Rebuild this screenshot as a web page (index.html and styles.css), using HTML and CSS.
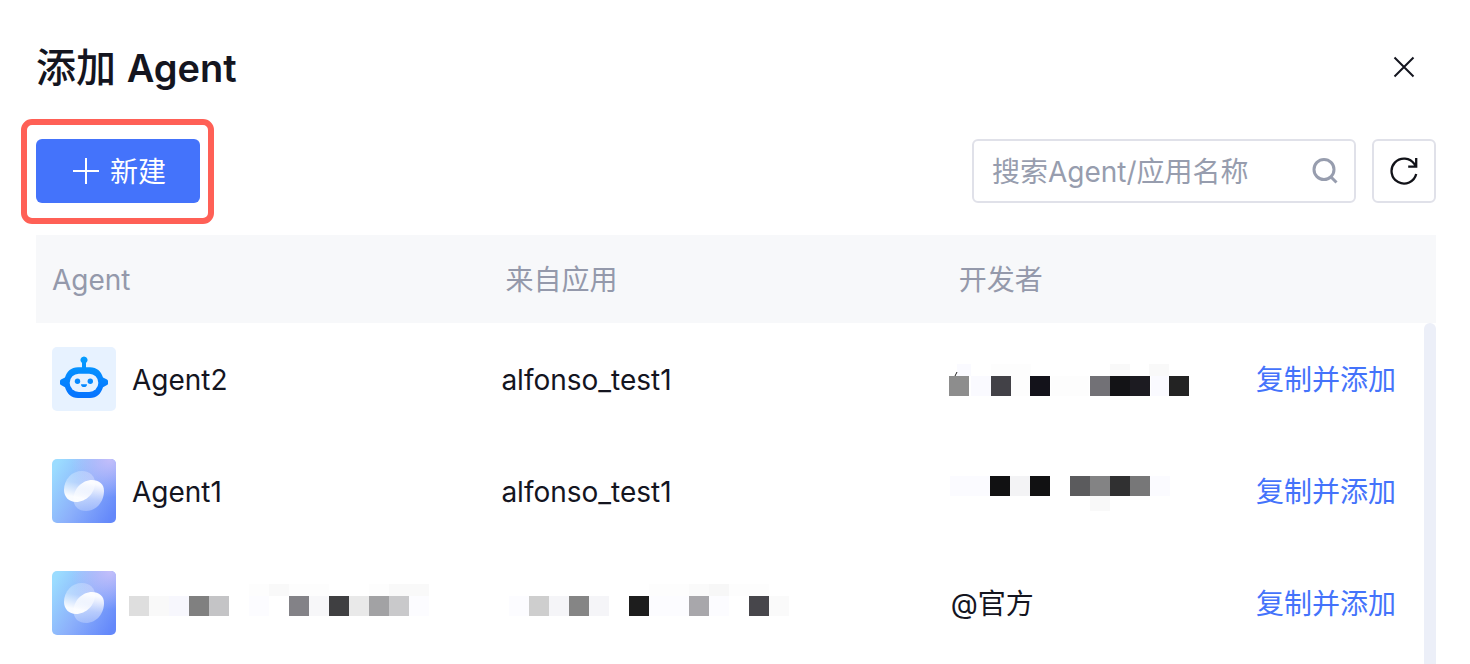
FILE: index.html
```html
<!DOCTYPE html>
<html lang="zh-CN">
<head>
<meta charset="utf-8">
<meta name="viewport" content="width=device-width, initial-scale=1">
<title>添加 Agent</title>
<link rel="stylesheet" href="styles.css">
</head>
<body>
<svg class="defs" aria-hidden="true">
  <defs>
    <linearGradient id="robot-fill" x1="0" y1="0" x2="0" y2="1">
      <stop offset="0" stop-color="#049dff"/><stop offset="1" stop-color="#0672ff"/>
    </linearGradient>
    <linearGradient id="orb-bg" x1="0" y1="0.2" x2="1" y2="0.8">
      <stop offset="0" stop-color="#9bdcff"/><stop offset="0.5" stop-color="#8cb0fb"/><stop offset="1" stop-color="#6488fa"/>
    </linearGradient>
    <radialGradient id="orb-corner" cx="0.9" cy="0" r="0.6">
      <stop offset="0" stop-color="#c3befa"/><stop offset="1" stop-color="#c3befa" stop-opacity="0"/>
    </radialGradient>
    <linearGradient id="orb-back" x1="0.6" y1="0" x2="0.4" y2="1">
      <stop offset="0" stop-color="#fff" stop-opacity="0.25"/><stop offset="0.4" stop-color="#fff" stop-opacity="0.35"/><stop offset="0.85" stop-color="#fff" stop-opacity="0.95"/>
    </linearGradient>
    <linearGradient id="orb-front" x1="0.6" y1="0" x2="0.4" y2="1">
      <stop offset="0.1" stop-color="#fff" stop-opacity="0.95"/><stop offset="0.6" stop-color="#fff" stop-opacity="0.45"/><stop offset="1" stop-color="#fff" stop-opacity="0.25"/>
    </linearGradient>
    <symbol id="orb" viewBox="0 0 64 64">
      <rect width="64" height="64" rx="5" fill="url(#orb-bg)"/>
      <rect width="64" height="64" rx="5" fill="url(#orb-corner)"/>
      <path d="M12 31C12 20 20 12 30 12C38 12 43 17 43 24C43 34 34 43 24 43C17 43 12 38 12 31Z" fill="url(#orb-back)"/>
      <path d="M52 32C52 43 44 52 34 52C26 52 21.500 47 21.500 40C21.500 30 30 21 40 21C47 21 52 25 52 32Z" fill="url(#orb-front)"/>
    </symbol>
  </defs>
</svg>

<main class="dialog">
  <header class="dialog-head">
    <h1 class="title">添加 <span class="title-latin">Agent</span></h1>
    <button class="close" type="button" aria-label="关闭">
      <svg width="24" height="24" viewBox="0 0 24 24"><path d="M2.500 2.500l19 19M21.500 2.500l-19 19" fill="none" stroke="#14151f" stroke-width="2"/></svg>
    </button>
  </header>

  <div class="toolbar">
    <div class="create-wrap">
      <button class="create" type="button">
        <svg width="28" height="28" viewBox="0 0 28 28" aria-hidden="true"><path d="M1 14h26M14 1v26" stroke="#fff" stroke-width="2"/></svg>
        <span class="text">新建</span>
      </button>
      <span class="highlight"></span>
    </div>
    <div class="tools">
      <label class="search">
        <input class="search-input" type="text" placeholder="搜索Agent/应用名称" aria-label="搜索Agent/应用名称">
        <svg width="28" height="28" viewBox="0 0 28 28" aria-hidden="true"><circle cx="14" cy="12.500" r="10" fill="none" stroke="#979dae" stroke-width="3"/><path d="M20.500 19.500l6 6" stroke="#979dae" stroke-width="3"/></svg>
      </label>
      <button class="refresh" type="button" aria-label="刷新">
        <svg width="28" height="28" viewBox="0 0 28 28" aria-hidden="true"><path d="M26.200 17A12.500 12.500 0 1 1 24.500 7.200L26 9.500M26.200 1v8.600h-8" fill="none" stroke="#111218" stroke-width="2.300"/></svg>
      </button>
    </div>
  </div>

  <section class="list">
    <table class="agents">
      <thead>
        <tr><th class="col-agent">Agent</th><th class="col-app">来自应用</th><th class="col-dev">开发者</th><th class="col-action"></th></tr>
      </thead>
      <tbody>
        <tr>
          <td><div class="agent">
            <svg class="avatar" viewBox="0 0 64 64" aria-hidden="true">
              <rect width="64" height="64" rx="5" fill="#e7f2ff"/>
              <path fill="url(#robot-fill)" d="M32 9.500a3.600 3.600 0 0 1 2 6.600V20.300h4C45 20.300 49 24.500 51 30.500L55 32.500Q56 33 56 34V36.500Q56 37.500 55 38L51 40.200C49 46.500 45 51 38 51H26C19 51 15 46.500 13 40.200L9 38Q8 37.500 8 36.500V34Q8 33 9 32.500L13 30.500C15 24.500 19 20.300 26 20.300H30V16.100A3.600 3.600 0 0 1 32 9.500Z"/>
              <rect x="17.700" y="26.700" width="28.600" height="18.300" rx="9.100" fill="#e7f2ff"/>
              <circle cx="25.500" cy="34.300" r="2.700" fill="#0689ff"/><circle cx="38.300" cy="34.300" r="2.700" fill="#0689ff"/>
              <path d="M29 37.200h6a3 2.800 0 0 1-6 0z" fill="#0689ff"/>
            </svg>
            <span class="name text">Agent2</span></div></td>
          <td><span class="text">alfonso_test1</span></td>
          <td>
            <svg class="mosaic" width="244" height="40" viewBox="0 0 244 40" aria-hidden="true">
              <path fill="#fafaff" d="M6 5h14v12H6zM20 17h20v20H20zM200 17h18v20h-18z"/><path fill="#fdfdfd" d="M40 5h40v12H40zM60 17h20v20H60zM100 17h38v20h-38z"/><path fill="#f9f9f9" d="M159 5h20v12h-20zM198 5h20v12h-20z"/>
              <path d="M4 17l2-4" stroke="#222"/>
              <path fill="#8d8d8d" d="M-2 17h20v20H-2z"/><path fill="#424147" d="M40 17h20v20H40z"/><path fill="#13121a" d="M79 17h20v20H79z"/><path fill="#727176" d="M139 17h20v20h-20z"/><path fill="#131316" d="M159 17h20v20h-20z"/><path fill="#1c1b21" d="M179 17h20v20h-20z"/><path fill="#232323" d="M218 17h20v20h-20z"/>
            </svg>
          </td>
          <td><a class="copy text" href="#">复制并添加</a></td>
        </tr>
        <tr>
          <td><div class="agent"><svg class="avatar" aria-hidden="true"><use href="#orb"/></svg><span class="name text">Agent1</span></div></td>
          <td><span class="text">alfonso_test1</span></td>
          <td>
            <svg class="mosaic" width="244" height="40" viewBox="0 0 244 40" aria-hidden="true">
              <path fill="#fbfbff" d="M-1 5h40v20H-1zM199 5h20v20h-20z"/><path fill="#f3f3f5" d="M59 5h20v20H59z"/><path fill="#f9f9f9" d="M139 25h20v15h-20z"/>
              <path fill="#111112" d="M39 5h20v20H39zM79 5h20v20H79z"/><path fill="#5b5b5d" d="M119 5h20v20h-20z"/><path fill="#838384" d="M139 5h20v20h-20z"/><path fill="#303031" d="M159 5h20v20h-20z"/><path fill="#777778" d="M179 5h20v20h-20z"/>
            </svg>
          </td>
          <td><a class="copy text" href="#">复制并添加</a></td>
        </tr>
        <tr>
          <td><div class="agent"><svg class="avatar" aria-hidden="true"><use href="#orb"/></svg>
            <svg class="mosaic" width="304" height="40" viewBox="0 0 304 40" aria-hidden="true">
              <path fill="#fcfcff" d="M121 13h20v20h-20zM281 13h20v20h-20z"/><path fill="#f7f7fd" d="M41 13h20v20H41z"/><path fill="#f9f9f9" d="M21 13h20v20H21zM141 1h20v12h-20zM261 1h40v12h-40z"/><path fill="#fdfdfd" d="M121 1h20v12h-20zM161 1h40v12h-40zM241 1h20v12h-20z"/><path fill="#f7f7f9" d="M181 13h20v20h-20z"/>
              <path fill="#dedede" d="M1 13h20v20H1z"/><path fill="#808080" d="M61 13h20v20H61z"/><path fill="#c4c4c6" d="M81 13h20v20H81z"/><path fill="#838287" d="M161 13h20v20h-20z"/><path fill="#3f3f41" d="M201 13h20v20h-20z"/><path fill="#e9e9e9" d="M221 13h20v20h-20z"/><path fill="#a2a2a4" d="M241 13h20v20h-20z"/><path fill="#c9c9cb" d="M261 13h20v20h-20z"/>
            </svg></div></td>
          <td>
            <svg class="mosaic" width="290" height="40" viewBox="0 0 290 40" aria-hidden="true">
              <path fill="#fcfcff" d="M8 13h20v20H8zM148 13h40v20h-40zM208 13h20v20h-20z"/><path fill="#f5f5f8" d="M48 13h20v20H48zM88 13h20v20H88z"/><path fill="#fafafa" d="M188 1h20v12h-20zM268 13h20v20h-20z"/><path fill="#fdfdfd" d="M148 1h40v12h-40zM228 1h40v12h-40z"/><path fill="#f7f7f7" d="M208 1h20v12h-20z"/>
              <path fill="#cecece" d="M28 13h20v20H28z"/><path fill="#858585" d="M68 13h20v20H68z"/><path fill="#1d1d1d" d="M128 13h20v20h-20z"/><path fill="#a8a7ab" d="M188 13h20v20h-20z"/><path fill="#47464b" d="M248 13h20v20h-20z"/>
            </svg>
          </td>
          <td><span class="text">@官方</span></td>
          <td><a class="copy text" href="#">复制并添加</a></td>
        </tr>
      </tbody>
    </table>
    <div class="scroll-thumb"></div>
  </section>
</main>
</body>
</html>
```

FILE: styles.css
```css
* {
  box-sizing: border-box;
}

body {
  margin: 0;
  background: #fff;
  color: #14151f;
  font-family: Inter, "Noto Sans CJK SC", sans-serif;
  font-size: 28px;
  line-height: 40px;
}

button,
input {
  font: inherit;
}

svg {
  display: block;
  flex: none;
}

.defs {
  position: absolute;
  width: 0;
  height: 0;
}

.dialog {
  display: flex;
  flex-direction: column;
  height: 100vh;
  padding: 40px 34px 0 36px;
  overflow: hidden;
}

.dialog-head,
.toolbar,
.tools,
.search,
.create,
.agent {
  display: flex;
  align-items: center;
}

.dialog-head,
.toolbar {
  flex: none;
  justify-content: space-between;
}

.dialog-head {
  align-items: flex-start;
}

.title {
  margin: 0;
  font-size: 40px;
  font-weight: 500;
  line-height: 56px;
}

.title-latin {
  font-size: 38px;
  font-weight: 600;
}

.close {
  display: grid;
  place-items: center;
  width: 64px;
  height: 54px;
  padding: 0;
  border: 0;
  background: none;
}

.toolbar {
  margin: 43px 0 32px;
}

.create-wrap {
  position: relative;
}

.create {
  gap: 10px;
  height: 64px;
  padding: 0 34px 0 36px;
  border: 0;
  border-radius: 6px;
  background: #4473fb;
  color: #fff;
}

.highlight {
  position: absolute;
  inset: -20px -14px -21px -15px;
  border: 6px solid #ff6056;
  border-radius: 11px;
  pointer-events: none;
}

.tools {
  gap: 16px;
}

.search {
  width: 384px;
  height: 64px;
  padding: 0 16px 0 18px;
  border: 2px solid #e0e1e9;
  border-radius: 6px;
}

.search-input {
  flex: 1;
  min-width: 0;
  padding: 2px 0 0;
  border: 0;
  outline: 0;
  background: none;
  color: inherit;
}

.search-input::placeholder {
  color: #979dae;
  opacity: 1;
}

.refresh {
  display: grid;
  place-items: center;
  width: 64px;
  height: 64px;
  padding: 0;
  border: 2px solid #e0e1e9;
  border-radius: 6px;
  background: #fff;
}

.list {
  position: relative;
  flex: 1;
  min-height: 0;
  overflow: hidden;
}

.agents {
  width: 100%;
  table-layout: fixed;
  border-collapse: collapse;
}

th {
  height: 88px;
  padding: 2px 16px 0;
  background: #f7f8fa;
  color: #9499ab;
  font-weight: 400;
  text-align: left;
}

td {
  height: 112px;
  padding: 0 16px;
}

.col-agent {
  width: 32.1%;
}

.col-app {
  width: 32.1%;
  padding-left: 20px;
}

.col-dev {
  width: 21.8%;
  padding-left: 24px;
}

.col-action {
  width: 14%;
}

.agent {
  gap: 12px;
}

.avatar {
  width: 64px;
  height: 64px;
}

.text {
  display: block;
  padding-top: 2px;
}

.name {
  padding-left: 4px;
}

.mosaic {
  overflow: visible;
}

.copy {
  color: #4473fb;
  text-decoration: none;
  white-space: nowrap;
}

.scroll-thumb {
  position: absolute;
  top: 88px;
  right: 0;
  bottom: -12px;
  width: 12px;
  border-radius: 6px;
  background: #eceff8;
}
```
